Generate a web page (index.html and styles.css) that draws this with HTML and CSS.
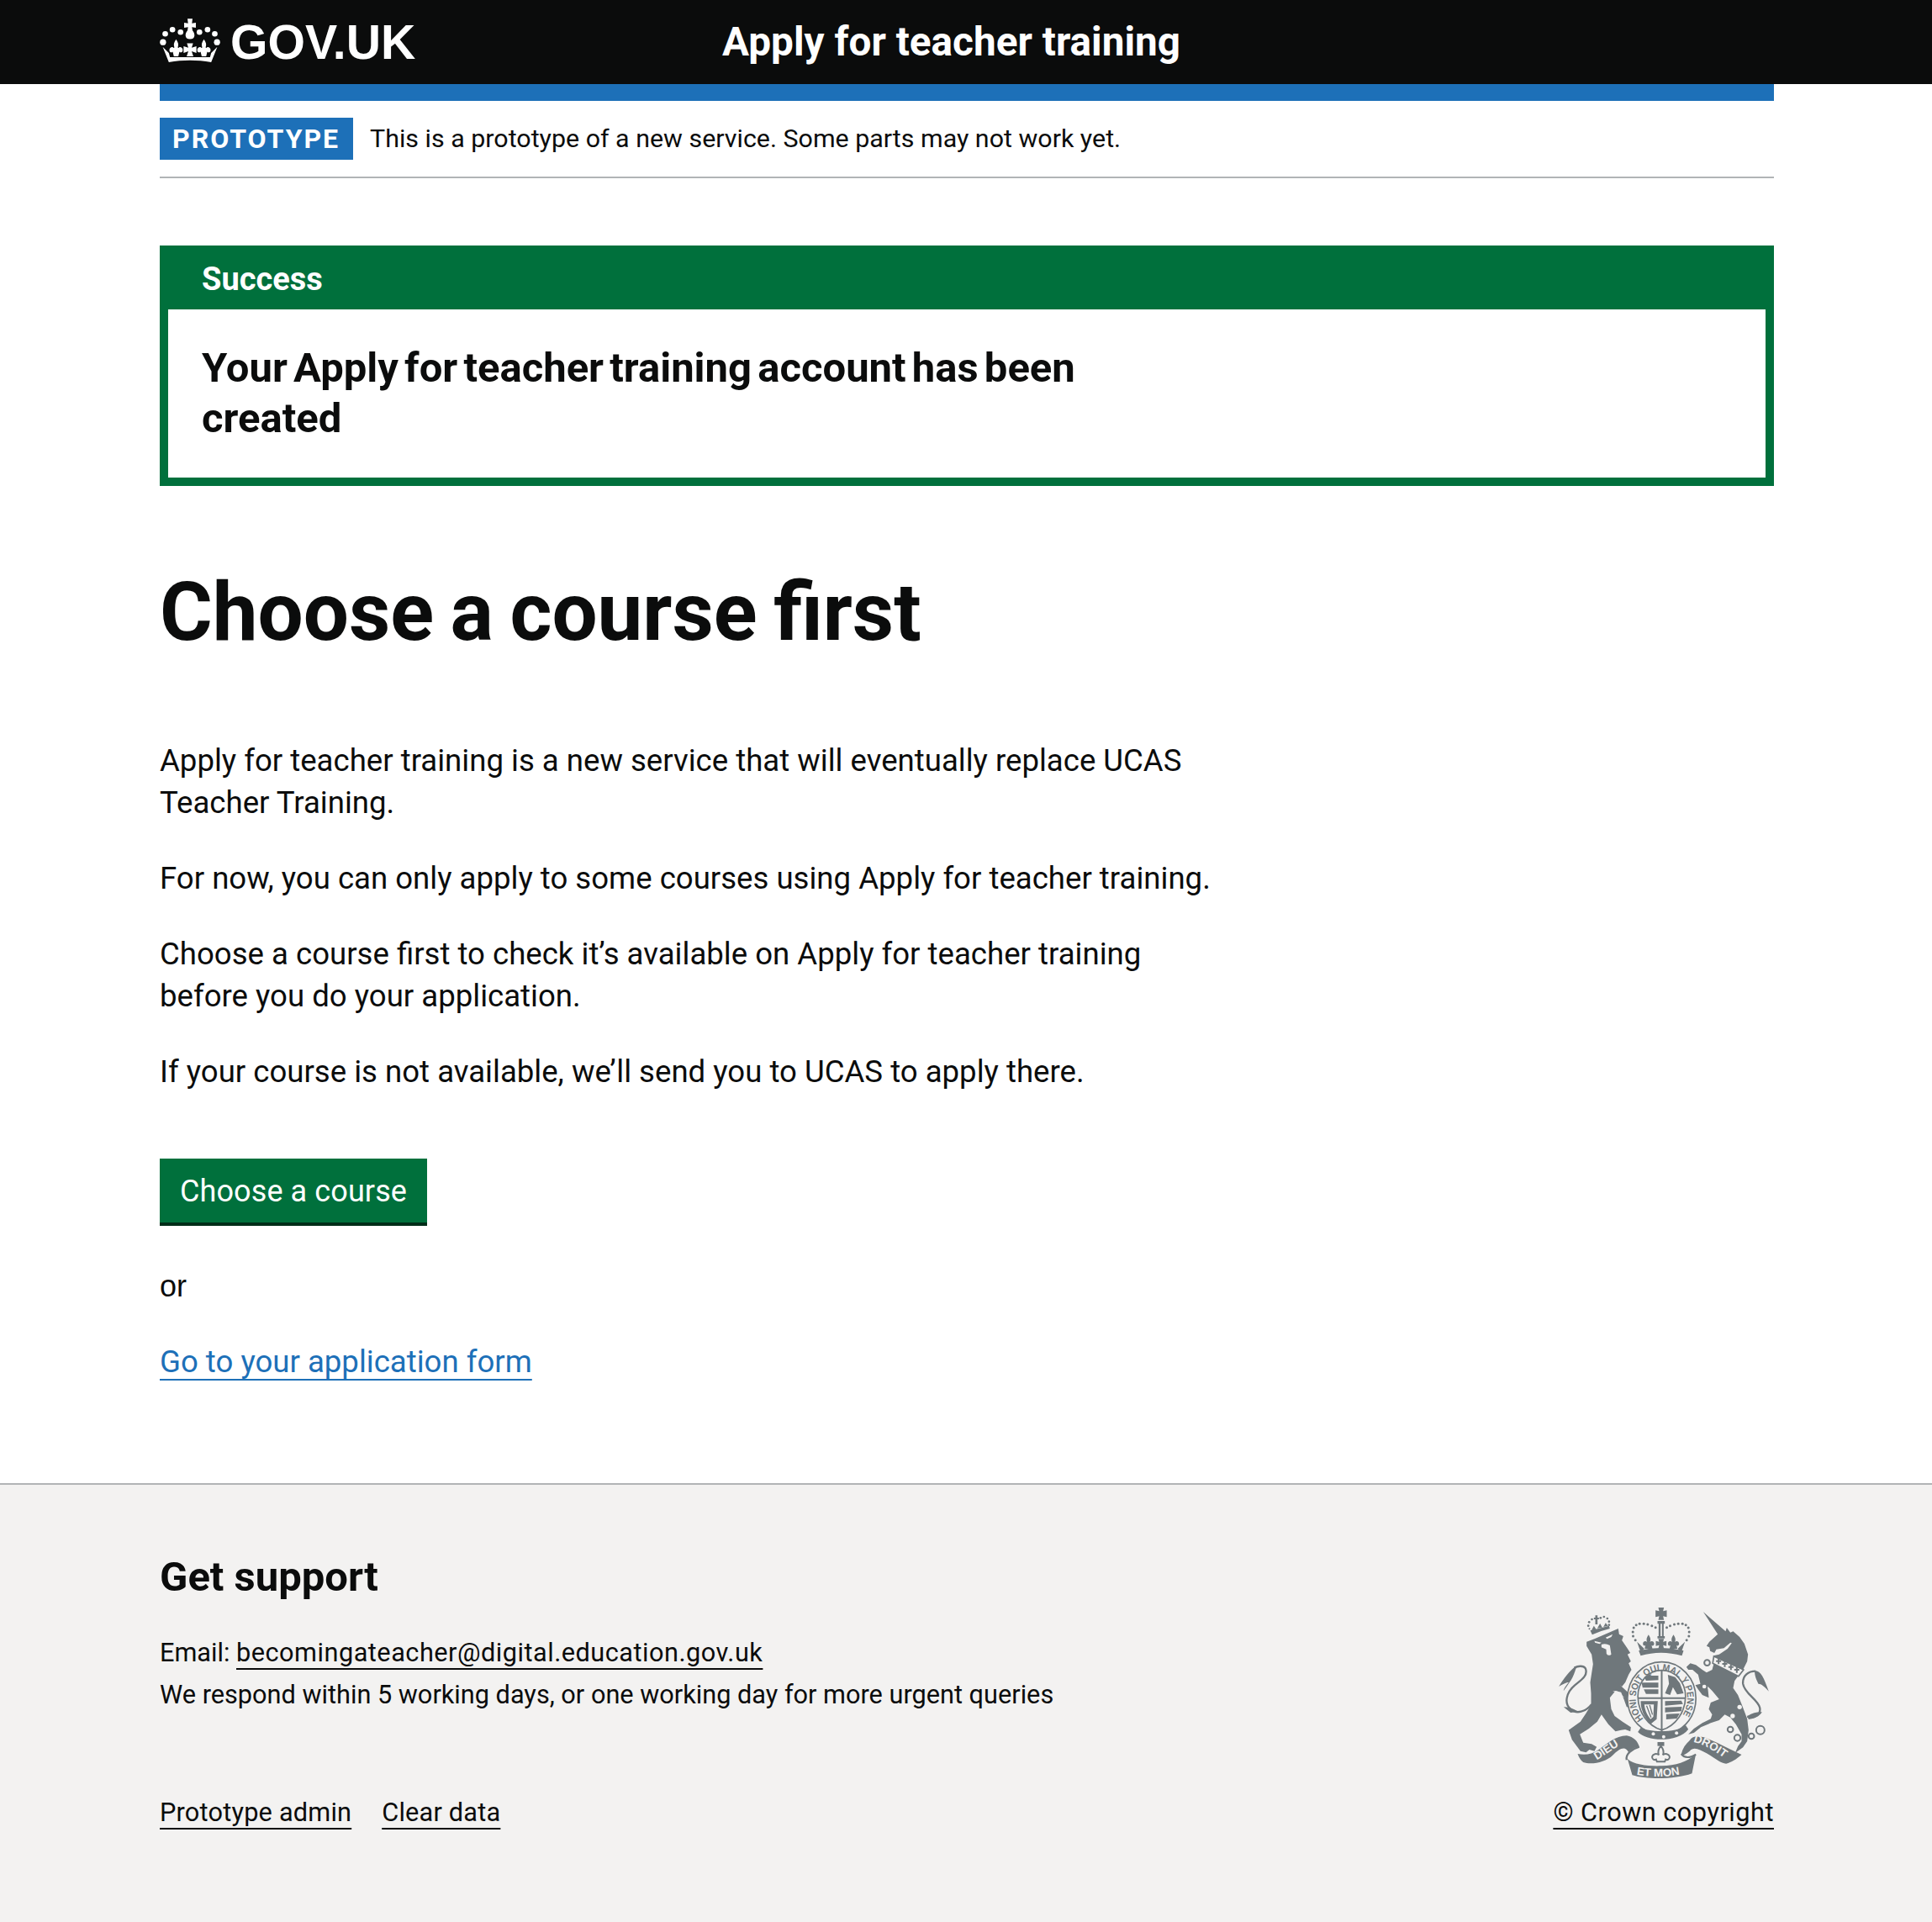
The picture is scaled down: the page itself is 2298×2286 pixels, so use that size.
FILE: index.html
```html
<!DOCTYPE html>
<html lang="en">
<head>
<meta charset="utf-8">
<title>Apply for teacher training</title>
<link rel="stylesheet" href="styles.css">
</head>
<body>
<header class="header">
  <div class="wrap header-inner">
    <a class="logo" href="#">
      <svg class="crown" viewBox="30 33 216 157" aria-hidden="true">
        <g fill="#fff">
          <circle cx="41" cy="118" r="11"/><circle cx="49" cy="88" r="10"/><circle cx="75" cy="73" r="10"/><circle cx="104" cy="82" r="10"/>
          <circle cx="235" cy="118" r="11"/><circle cx="227" cy="88" r="10"/><circle cx="201" cy="73" r="10"/><circle cx="172" cy="82" r="10"/>
          <path d="M129 34h18l-2 16 14-2v18l-14-2 2 12c6 8 7 13 7 18 0 8-6 13-16 13s-16-5-16-13c0-5 1-10 7-18l2-12-14 2V48l14 2z"/>
          <path d="M88 108c8 12 10 19 6 29l3 2c3-7 15-3 15 7 0 8-8 12-12 6l-4 17H80l-4-17c-4 6-12 2-12-6 0-10 12-14 15-7l3-2c-4-10-2-17 6-29z"/>
          <path d="M188 108c8 12 10 19 6 29l3 2c3-7 15-3 15 7 0 8-8 12-12 6l-4 17h-16l-4-17c-4 6-12 2-12-6 0-10 12-14 15-7l3-2c-4-10-2-17 6-29z"/>
          <path d="M127 122h22l-5 16 17-5v24l-17-6 6 18h-24l6-18-17 6v-24l17 5z"/>
          <path d="M40 135l22 22 4 15h144l4-15 22-22-22 55c-50-9-102-9-152 0z"/>
        </g>
      </svg>
      <span class="logo-text">GOV.UK</span>
    </a>
    <a class="service" href="#">Apply for teacher training</a>
  </div>
</header>
<div class="wrap">
  <div class="blue-bar"></div>
  <div class="phase">
    <strong class="tag">PROTOTYPE</strong>
    <span class="phase-text">This is a prototype of a new service. Some parts may not work yet.</span>
  </div>
  <main class="main">
    <div class="banner">
      <h2 class="banner-title">Success</h2>
      <div class="banner-body">
        <p class="banner-heading">Your Apply for teacher training account has been created</p>
      </div>
    </div>
    <h1 class="title">Choose a course first</h1>
    <div class="prose">
      <p>Apply for teacher training is a new service that will eventually replace UCAS Teacher Training.</p>
      <p>For now, you can only apply to some courses using Apply for teacher training.</p>
      <p>Choose a course first to check it’s available on Apply for teacher training before you do your application.</p>
      <p>If your course is not available, we’ll send you to UCAS to apply there.</p>
    </div>
    <a class="button" href="#">Choose a course</a>
    <p class="or">or</p>
    <p class="next"><a class="link" href="#">Go to your application form</a></p>
  </main>
</div>
<footer class="footer">
  <div class="wrap">
    <h2 class="footer-title">Get support</h2>
    <div class="footer-row">
      <div class="footer-left">
        <p class="support">Email: <a class="dark email" href="#">becomingateacher@digital.education.gov.uk</a><br>We respond within 5 working days, or one working day for more urgent queries</p>
        <ul class="meta">
          <li><a class="dark" href="#">Prototype admin</a></li>
          <li><a class="dark" href="#">Clear data</a></li>
        </ul>
      </div>
      <a class="dark copyright" href="#">© Crown copyright</a>
    </div>
    <svg class="arms" viewBox="70 65 755 615" aria-hidden="true">
      <defs>
        <path id="garter" d="M375 465A92 100 0 1 1 508 460"/>
        <path id="rib-left" d="M208 612C240 595 280 560 318 545"/>
        <path id="rib-mid" d="M350 664C400 674 470 674 528 658"/>
        <path id="rib-right" d="M552 548C590 555 640 585 678 618"/>
      </defs>

      <g transform="translate(60 45)" fill="#6f777b">
        <path d="M112 145L140 135L225 98L228 118L243 125L238 140L255 165L268 185L258 190L270 215L262 222L272 245L262 262L250 290L238 305L228 297L270 335L280 370L272 380L255 378L245 350L235 325L215 320L195 345L200 385L212 410L240 430L270 450L268 465L250 458L235 460L215 465L190 440L165 405L150 430L120 455L88 475L100 505L130 510L148 520L140 535L122 530L110 540L90 535L75 515L60 495L48 460L90 430L110 400L128 370L128 330L125 290L135 225L130 190L112 160Z"/>
        <path d="M70 235C55 245 30 275 13 305C30 295 40 290 48 290C35 305 30 315 30 320C45 300 55 285 62 272C70 255 72 245 75 238Z"/>
        <path d="M30 378C50 378 70 385 80 395L55 398Z"/>
        <path d="M125 105L132 120Q165 105 195 98L192 88Q155 98 125 105ZM130 103L138 88L146 100ZM150 97L160 80L168 94ZM172 92L180 78L188 88ZM143 65h-5v-6h5v-8h8v8h5v6h-5v18h-8z"/>
        <circle cx="118" cy="88" r="4"/><circle cx="121" cy="75" r="4"/><circle cx="131" cy="65" r="4"/><circle cx="162" cy="60" r="4"/><circle cx="174" cy="56" r="4"/><circle cx="186" cy="62" r="4"/><circle cx="192" cy="73" r="4"/><circle cx="192" cy="85" r="4"/><circle cx="122" cy="99" r="3"/>
        <path class="arms-light" d="M140 142L165 148L158 153L142 148ZM180 130L205 118L200 128L185 135ZM165 155Q180 150 195 158L200 190Q190 198 183 188L182 172L165 165ZM205 320L222 322L248 345L222 330Z"/>
      </g>
      <path class="arms-line" transform="translate(60 45)" d="M130 368C110 395 75 405 55 385C30 365 40 325 70 300C95 280 118 265 108 240C100 228 80 232 68 238"/>

      <g transform="translate(450 45)" fill="#6f777b">
        <path d="M138 38L218 108L222 95L235 112L245 108L268 128L285 152L298 190L295 215L280 245L262 268L250 285L245 310L262 335L278 375L295 420L300 460L295 500L280 522L252 542L262 518L275 500L275 475L255 440L235 415L215 405L195 425L165 435L130 450L105 470L85 475L105 455L135 435L165 420L170 405L158 385L165 362L195 350L170 320L150 300L155 315L158 345L135 335L122 318L110 300L128 295L120 262L100 245L85 245L78 235L92 222L112 228L135 245L150 255L170 245L178 215L175 195L195 190L225 170L240 150L235 148L212 168L185 172L178 185L163 178L160 165L150 160L160 145L190 118Z"/>
        <path d="M322 248C345 248 355 275 372 322C358 305 345 295 335 295C330 285 320 265 322 248Z"/>
        <path d="M296 410C315 398 332 395 348 396C338 412 320 420 300 422Z"/>
        <path class="collar" d="M176 197L282 245L264 268L172 222Z"/>
        <path d="M190 205h6v6h6v6h-6v8h-6v-8h-6v-6h6zM212 215h6v6h6v6h-6v8h-6v-8h-6v-6h6zM234 226h6v6h6v6h-6v8h-6v-8h-6v-6h6zM255 236h6v6h6v6h-6v8h-6v-8h-6v-6h6z"/>
        <g class="arms-light">
          <circle cx="275" cy="328" r="10"/><circle cx="268" cy="378" r="8"/><circle cx="243" cy="410" r="8"/>
        </g>
      </g>
      <path class="arms-line" transform="translate(450 45)" d="M295 412C320 420 345 405 340 380C332 350 285 330 280 295C278 265 300 250 325 250"/>
      <g class="arms-ring">
        <circle cx="602" cy="265" r="10"/><circle cx="592" cy="350" r="10"/><circle cx="685" cy="503" r="10"/><circle cx="710" cy="533" r="11"/><circle cx="760" cy="527" r="10"/><circle cx="792" cy="505" r="15"/>
      </g>

      <g fill="#6f777b">
        <path d="M428 68h20l-3 13 13-3v24l-13-3 3 13h-20l3-13-13 3V78l13 3z"/>
        <path d="M425 116h26v10h-4v44h4v8h-26v-8h4v-44h-4zM436 126v44h5v-44z"/>
        <path d="M393 165c7 10 9 18 5 26 5-5 15-3 15 6 0 6-5 9-9 6l3 12h-28l3-12c-4 3-9 0-9-6 0-9 10-11 15-6-4-8-2-16 5-26z"/>
        <path d="M482 165c7 10 9 18 5 26 5-5 15-3 15 6 0 6-5 9-9 6l3 12h-28l3-12c-4 3-9 0-9-6 0-9 10-11 15-6-4-8-2-16 5-26z"/>
        <path d="M428 180h20l-3 10 12-3v18l-12-3 3 12h-20l3-12-12 3v-18l12 3z"/>
        <path d="M352 190L378 215L365 228ZM523 190L497 215L510 228Z"/>
        <path d="M358 222Q437 202 518 222L512 240Q437 218 365 240Z"/>
        <circle cx="337" cy="155" r="4.500"/><circle cx="340" cy="140" r="4.500"/><circle cx="349" cy="130" r="4.500"/><circle cx="361" cy="126" r="4.500"/><circle cx="376" cy="126" r="4.500"/><circle cx="390" cy="128" r="4.500"/><circle cx="405" cy="133" r="4.500"/><circle cx="418" cy="139" r="4.500"/><circle cx="338" cy="170" r="4.500"/><circle cx="346" cy="184" r="4.500"/>
        <circle cx="538" cy="155" r="4.500"/><circle cx="535" cy="140" r="4.500"/><circle cx="526" cy="130" r="4.500"/><circle cx="514" cy="126" r="4.500"/><circle cx="499" cy="126" r="4.500"/><circle cx="485" cy="128" r="4.500"/><circle cx="470" cy="133" r="4.500"/><circle cx="458" cy="139" r="4.500"/><circle cx="537" cy="170" r="4.500"/><circle cx="529" cy="184" r="4.500"/>
      </g>

      <g fill="#6f777b">
        <path d="M140 590C165 595 190 593 215 575C245 555 275 525 315 525C340 530 355 545 360 565C345 565 332 573 322 585C310 560 290 570 265 595C240 620 190 630 160 620C152 615 145 603 140 590Z"/>
        <path d="M540 542C550 525 570 525 595 532C640 550 685 575 725 593C705 610 690 620 670 625C650 625 630 605 600 588C575 575 555 563 540 580C520 595 510 600 510 590C515 570 525 555 540 542Z"/>
        <path d="M318 608C340 630 400 635 440 633C490 632 530 620 562 590L548 660C490 682 385 682 335 666Z"/>
        <rect x="425" y="548" width="24" height="14"/>
      </g>
      <path class="arms-line" d="M360 565C335 572 310 590 315 612M510 590C520 605 540 605 562 592"/>
      <path class="fleur" d="M437 562c9 11 12 22 7 32 8-7 21-4 24 5 2 9-7 15-14 11l-3 8h-28l-3-8c-7 4-16-2-14-11 3-9 16-12 24-5-5-10-2-21 7-32z"/>

      <ellipse class="ring" cx="440" cy="392" rx="122" ry="130"/>
      <path d="M365 497C390 512 495 517 525 487L535 502C500 549 390 549 355 512Z" fill="#6f777b"/>
      <path class="shield" d="M355 385C355 335 390 292 440 292C490 292 525 335 525 385C525 440 490 490 440 505C390 490 355 440 355 385Z"/>
      <g fill="#6f777b">
        <path d="M378 316l12-5 38 0 0 16-44 2zM368 336l60 0 0 18-56 0zM376 360l52 0 0 16-44 0z"/>
        <path d="M462 308L488 316L505 338L518 374L495 378L480 352L470 380L452 374L466 340Z"/>
        <path d="M452 402l58-2 6 12-64 6zM452 424l60-2-2 16-58 4zM456 448l48-2-10 18-38 3z"/>
        <path d="M365 402H426L422 466L400 484C380 462 365 436 365 402ZM378 414C380 436 388 452 400 466L410 458L412 414Z"/>
      </g>
      <path class="shield-lines thin" d="M386 418L402 460M397 416L407 450"/>
      <path class="shield-lines" d="M440 292V510M355 391H525"/>
      <g fill="#f3f2f1">
        <circle cx="410" cy="519" r="6"/><circle cx="447" cy="529" r="6"/><circle cx="493" cy="516" r="6"/>
      </g>

      <g class="arms-text garter-text">
        <text><textPath href="#garter" textLength="440" lengthAdjust="spacingAndGlyphs">HONI SOIT QUI MAL Y PENSE</textPath></text>
      </g>
      <g class="arms-text ribbon-text">
        <text><textPath href="#rib-left">DIEU</textPath></text>
        <text><textPath href="#rib-mid">ET MON</textPath></text>
        <text><textPath href="#rib-right">DROIT</textPath></text>
      </g>
    </svg>
  </div>
</footer>
</body>
</html>
```
FILE: styles.css
```css
* { box-sizing: border-box; }
html, body { margin: 0; padding: 0; background: #fff; }
body { display: flex; flex-direction: column; min-height: 100vh; font-family: Roboto, "Liberation Sans", sans-serif; color: #0b0c0c; font-size: 36.6px; line-height: 50px; }
p { margin: 0; }
h1, h2 { margin: 0; }
.wrap { width: 1920px; margin-left: 190px; position: relative; }

.header { background: #0b0c0c; height: 100px; color: #fff; }
.header-inner { display: flex; align-items: center; height: 100px; }
.logo { display: flex; align-items: center; width: 669px; color: #fff; text-decoration: none; }
.crown { width: 72px; height: 52px; margin-right: 12px; margin-top: -4px; }
.logo-text { font-family: "Liberation Sans", sans-serif; font-weight: 700; font-size: 57.2px; line-height: 60px; }
.service { color: #fff; text-decoration: none; font-weight: 700; font-size: 47.7px; line-height: 60px; }

.blue-bar { height: 20px; background: #1d70b8; }
.phase { display: flex; align-items: center; height: 92px; border-bottom: 2px solid #b1b4b6; }
.tag { background: #1d70b8; color: #fff; font-weight: 700; font-size: 32px; line-height: 50px; height: 50px; letter-spacing: 2px; padding: 0 16px 0 15px; margin-right: 20px; }
.phase-text { font-size: 30.4px; line-height: 50px; }

.main { padding-top: 80px; padding-bottom: 119px; }
.banner { background: #00703c; border: 10px solid #00703c; margin-bottom: 100px; }
.banner-title { color: #fff; font-size: 38px; line-height: 50px; padding: 5px 40px 11px; font-weight: 700; }
.banner-body { background: #fff; padding: 40px; }
.banner-heading { font-weight: 700; font-size: 49px; word-spacing: -5px; line-height: 60px; max-width: 1160px; }
.title { font-size: 96px; word-spacing: -4.4px; line-height: 100px; font-weight: 700; margin-bottom: 102px; }
.prose { width: 1260px; }
.prose p { margin-bottom: 40px; }
.prose p:last-child { margin-bottom: 78px; }
.button { display: inline-block; background: #00703c; color: #fff; font-size: 36px; letter-spacing: .1px; text-decoration: none; height: 80px; line-height: 78px; padding: 0 24px; border-bottom: 4px solid #002d18; }
.or { font-family: "Liberation Sans", sans-serif; font-size: 36px; margin-top: 47px; margin-bottom: 40px; }
.link { color: #1d70b8; text-decoration-thickness: 2px; text-underline-offset: 8px; text-decoration-skip-ink: none; }

.footer { flex: 1; background: #f3f2f1; border-top: 2px solid #b1b4b6; padding-top: 80px; font-size: 30.7px; line-height: 50px; }
.footer-title { font-size: 49px; line-height: 60px; font-weight: 700; margin-bottom: 35px; }
.footer-row { display: flex; justify-content: space-between; align-items: flex-end; }
.support { margin-bottom: 90px; }
.meta { display: flex; list-style: none; margin: 0; padding: 0; gap: 36px; }
.dark { color: #0b0c0c; letter-spacing: .2px; text-decoration-thickness: 2px; text-underline-offset: 8px; text-decoration-skip-ink: none; }
.email { letter-spacing: .5px; }
.copyright { letter-spacing: .5px; }

.arms { position: absolute; right: 5px; top: 65px; width: 252px; height: 205px; }
.arms-text { font-family: "Liberation Sans", sans-serif; font-weight: 700; }
.garter-text { font-size: 34px; fill: #6f777b; }
.ribbon-text { font-size: 40px; fill: #f3f2f1; }
.arms-light { fill: #f3f2f1; }
.arms-line { fill: none; stroke: #6f777b; stroke-width: 7px; }
.arms-ring { fill: #f3f2f1; stroke: #6f777b; stroke-width: 6px; }
.collar { fill: #f3f2f1; stroke: #6f777b; stroke-width: 5px; }
.ring { fill: #f3f2f1; stroke: #6f777b; stroke-width: 5px; }
.fleur { fill: #f3f2f1; stroke: #6f777b; stroke-width: 6px; }
.shield { fill: #f3f2f1; stroke: #6f777b; stroke-width: 5px; }
.shield-lines { fill: none; stroke: #6f777b; stroke-width: 6px; }
.shield-lines.thin { stroke-width: 4px; }
```
